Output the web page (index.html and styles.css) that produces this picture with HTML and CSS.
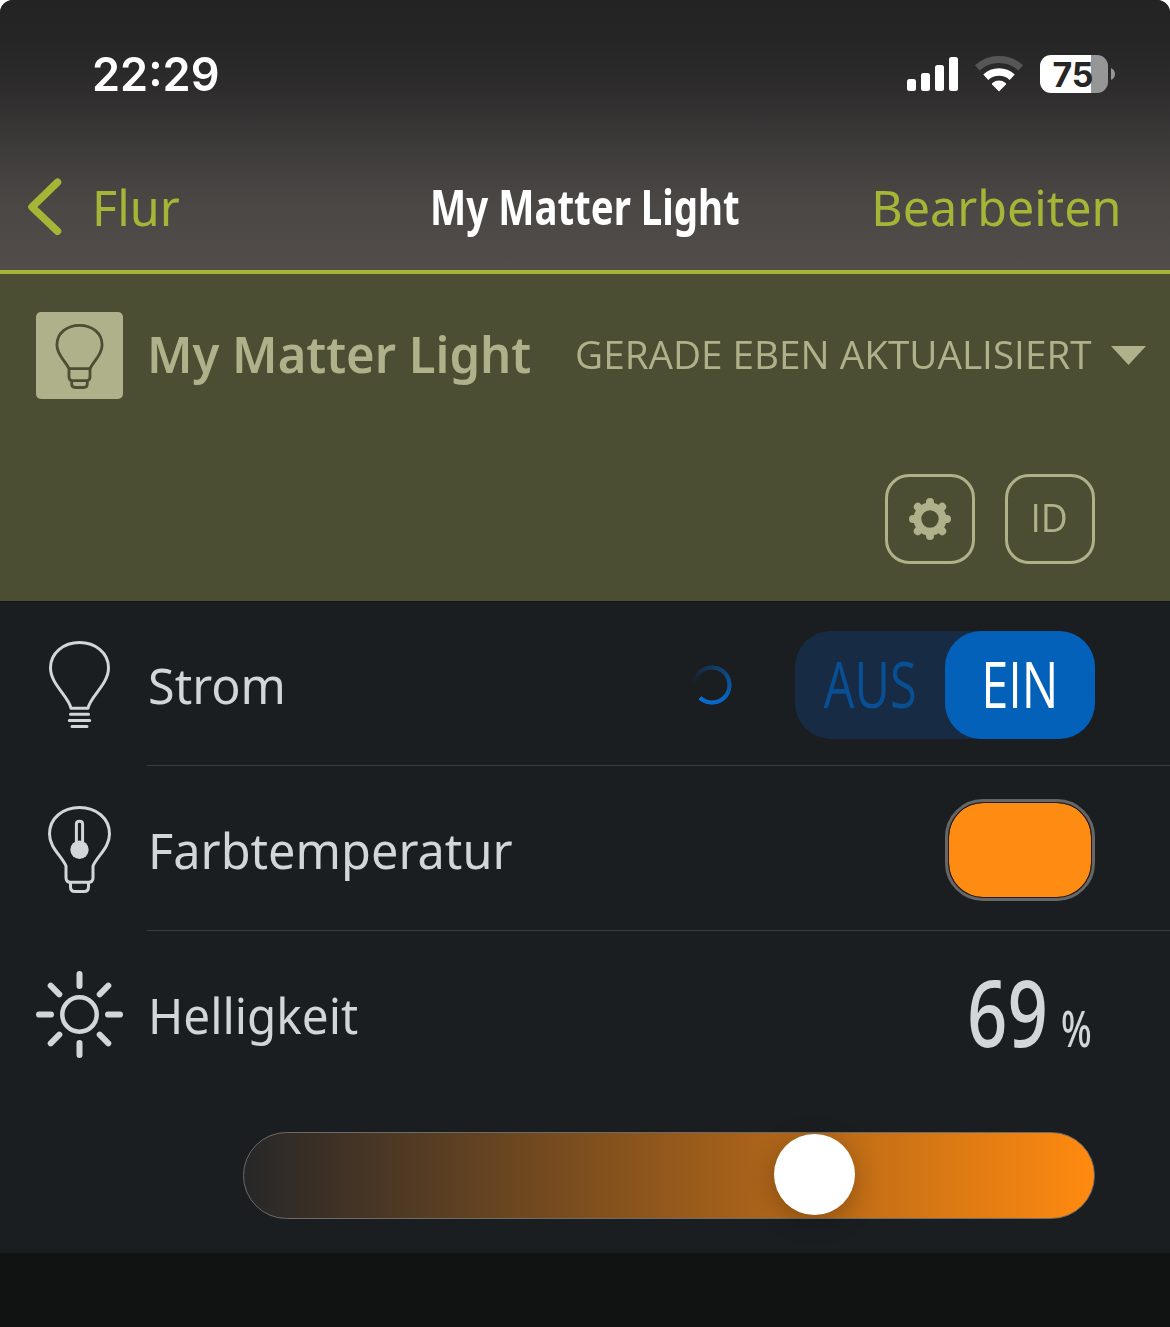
FILE: index.html
```html
<!DOCTYPE html>
<html lang="de">
<head>
<meta charset="utf-8">
<title>My Matter Light</title>
<link rel="stylesheet" href="styles.css">
</head>
<body>
<div class="screen">
  <header class="top">
    <div class="status">
      <span class="clock">22:29</span>
      <div class="indicators">
        <svg class="signal" width="51" height="34" viewBox="0 0 51 34" fill="#fff">
          <rect x="0" y="22" width="9" height="12" rx="2.5"/><rect x="14" y="16" width="9" height="18" rx="2.5"/><rect x="28" y="8" width="9" height="26" rx="2.5"/><rect x="42" y="0" width="9" height="34" rx="2.5"/>
        </svg>
        <svg class="wifi" width="48" height="37" viewBox="0 0 48 37" fill="none">
          <path d="M2.300 12.800A32.300 32.300 0 0 1 45.700 12.800" stroke="#565656" stroke-width="7"/>
          <path d="M10.800 22.200A19.500 19.500 0 0 1 37.200 22.200" stroke="#fff" stroke-width="7.400"/>
          <path d="M24 36.600L17.100 29.500Q16.500 28.600 17.300 27.900Q24 23 30.700 27.900Q31.500 28.600 30.900 29.500Z" fill="#fff"/>
        </svg>
        <div class="battery"><span class="battery-body">75</span><svg width="4" height="12" viewBox="0 0 4 12"><path d="M0 0Q4 2 4 6T0 12Z" fill="#969696"/></svg></div>
      </div>
    </div>
    <nav class="nav">
      <div class="back">
        <svg width="34" height="58" viewBox="0 0 34 58" fill="none" stroke="#a5b636" stroke-width="7.500" stroke-linecap="round" stroke-linejoin="round"><path d="M29.500 4.200L4 29L29.500 53.200"/></svg>
        <span class="back-label">Flur</span>
      </div>
      <h1 class="title">My Matter Light</h1>
      <span class="edit">Bearbeiten</span>
    </nav>
  </header>

  <section class="device">
    <div class="device-head">
      <svg class="tile" width="87" height="87" viewBox="0 0 87 87" fill="none" stroke="#4c4e33" stroke-width="2.800" stroke-linejoin="round">
        <path d="M33 56.700C29.500 49 20.900 43 20.900 33C20.900 21 31 13.300 43.500 13.300S66.100 21 66.100 33C66.100 43 57.500 49 54 56.700Z"/>
        <path d="M33 56.700V65Q33 68.700 36.500 68.700H50.500Q54 68.700 54 65V56.700"/>
        <path d="M35.700 69V72Q35.700 75.500 39.200 75.500H47.800Q51.300 75.500 51.300 72V69"/>
      </svg>
      <h2 class="device-name">My Matter Light</h2>
      <span class="updated">GERADE EBEN AKTUALISIERT</span>
      <svg class="caret" width="35" height="19" viewBox="0 0 35 19"><path d="M0 0H35L17.500 19Z" fill="#afb18a"/></svg>
    </div>
    <div class="actions">
      <div class="action">
        <svg width="42" height="42" viewBox="-21 -21 42 42" fill="none" stroke="#afb18a">
          <circle r="12.600" stroke-width="7.800"/>
          <path d="M0 -13V-17M0 13V17M-13 0H-17M13 0H17M-9.500 -9.500L-12.200 -12.200M9.500 -9.500L12.200 -12.200M-9.500 9.500L-12.200 12.200M9.500 9.500L12.200 12.200" stroke-width="8" stroke-linecap="round"/>
        </svg>
      </div>
      <div class="action"><span class="id">ID</span></div>
    </div>
  </section>

  <main class="list">
    <div class="row">
      <svg class="icon" width="87" height="88" viewBox="0 0 87 88" fill="none" stroke="#d2d6d9" stroke-width="3" stroke-linejoin="round" stroke-linecap="round">
        <path d="M35 67.300C33 55.500 14.500 43.500 14.500 26.700C14.500 12 27.500 1.500 43.500 1.500S72.500 12 72.500 26.700C72.500 43.500 54 55.500 52 67.300Z"/>
        <path d="M34.500 73.300H52.500M33.300 79.400H53.700M36 85.600H51"/>
      </svg>
      <span class="label strom">Strom</span>
      <span class="spinner"></span>
      <div class="switch"><span class="option"><b class="condensed off">AUS</b></span><span class="option selected"><b class="condensed on">EIN</b></span></div>
    </div>
    <div class="row">
      <svg class="icon" width="87" height="88" viewBox="0 0 87 88" fill="none" stroke="#d2d6d9" stroke-width="3" stroke-linejoin="round">
        <path d="M30 60C26 50 13.500 42 13.500 28C13.500 12 27 1.500 43.500 1.500S73.500 12 73.500 28C73.500 42 61 50 57 60V71.500Q57 76.300 52.500 76.300H34.500Q30 76.300 30 71.500Z"/>
        <path d="M34.500 77V81Q34.500 85.500 39 85.500H48Q52.500 85.500 52.500 81V77"/>
        <path d="M40.400 38V18Q40.400 15.200 43.500 15.200T46.600 18V38"/>
        <circle cx="43.500" cy="43.700" r="9.200" fill="#d2d6d9" stroke="none"/>
      </svg>
      <span class="label farbe">Farbtemperatur</span>
      <span class="swatch"></span>
    </div>
    <div class="row">
      <svg class="icon" width="87" height="88" viewBox="0 0 87 88" fill="none" stroke="#d2d6d9" stroke-width="6" stroke-linecap="round">
        <circle cx="43.500" cy="43.500" r="17.200" stroke-width="4.500"/>
        <path d="M43.500 3V15M43.500 72V84M3 43.500H15M72 43.500H84M14.700 14.700L23.300 23.300M72.300 14.700L63.700 23.300M14.700 72.300L23.300 63.700M72.300 72.300L63.700 63.700"/>
      </svg>
      <span class="label hell">Helligkeit</span>
      <div class="reading"><span class="value">69</span><span class="unit">%</span></div>
    </div>
    <div class="slider"><span class="track"><span class="knob"></span></span></div>
  </main>
</div>
</body>
</html>
```
FILE: styles.css
```css
* { box-sizing: border-box; }
body { margin: 0; background: #fff; font-family: "Noto Sans", sans-serif; }
svg { display: block; flex: none; }
h1, h2 { margin: 0; }
span, h1, h2 { white-space: nowrap; }

.screen {
  width: 1170px;
  height: 1327px;
  overflow: hidden;
  background: #111312;
  border-radius: 13px 13px 0 0;
}

.top {
  height: 274px;
  border-bottom: 4px solid #a5b636;
  background: linear-gradient(#232323 0, #252525 35px, #2e2c2c 90px, #3e3c3b 150px, #4b4745 205px, #524d4b 270px);
}
.status {
  height: 148px;
  padding: 0 55px 0 92px;
  display: flex;
  align-items: center;
  justify-content: space-between;
}
.clock { font: 600 46.500px/60px Inter, sans-serif; color: #fff; transform: scaleX(.97); transform-origin: 0 50%; }
.indicators { display: flex; align-items: center; }
.wifi { margin: -2px 17px 0; }
.battery { display: flex; align-items: center; gap: 3px; }
.battery-body {
  width: 68px;
  height: 38px;
  border-radius: 11px;
  background: linear-gradient(90deg, #fff 51px, #969696 51px);
  color: #262626;
  font: 700 34px/39px Inter, sans-serif;
  text-align: center;
  padding-right: 2px;
}

.nav {
  height: 118px;
  padding: 0 48px 0 28px;
  display: grid;
  grid-template-columns: 1fr auto 1fr;
  align-items: center;
  color: #a5b636;
  font-size: 50px;
  line-height: 60px;
}
.back { display: flex; align-items: center; gap: 30px; }
.back-label { transform: scaleX(.97); transform-origin: 0 50%; }
.title {
  width: 308px;
  margin: -2px -9px 0 9px;
  color: #fff;
  font-size: 49px;
  font-weight: 700;
  transform: scaleX(.784);
  transform-origin: 0 50%;
}
.edit { justify-self: end; margin-right: 1px; transform: scaleX(.968); transform-origin: 100% 50%; }

.device { height: 327px; padding-top: 38px; background: #4c4e33; color: #afb18a; }
.device-head { height: 87px; padding-left: 36px; display: flex; align-items: center; }
.tile { background: #afb18a; border-radius: 5px; }
.device-name {
  margin: -3px 0 0 24px;
  width: 428px;
  font-size: 50px;
  line-height: 60px;
  font-weight: 600;
  transform: scaleX(.98);
  transform-origin: 0 50%;
}
.updated {
  width: 536px;
  margin-top: -4px;
  font-family: "Open Sans", sans-serif;
  font-size: 39px;
  line-height: 50px;
  transform: scaleX(.992);
  transform-origin: 0 50%;
}
.actions { margin-top: 75px; padding-right: 75px; display: flex; justify-content: flex-end; gap: 30px; }
.action {
  width: 90px;
  height: 90px;
  border: 3px solid #afb18a;
  border-radius: 24px;
  display: flex;
  align-items: center;
  justify-content: center;
}
.id { font-family: "Open Sans", sans-serif; font-size: 38px; line-height: 50px; margin: -4px 2px 0 0; transform: scaleX(.98); }

.list { height: 652px; background: #1b1e21; color: #d2d6d9; border-top: 1px solid #14171a; }
.row {
  height: 165px;
  padding: 0 75px 0 36px;
  display: flex;
  align-items: center;
  background: linear-gradient(#3b3d3f, #3b3d3f) 147px 163px / 1023px 1px no-repeat;
}
.row:nth-child(3) { background: none; }
.label { flex: 1; margin-left: 25px; font-size: 50px; line-height: 60px; transform-origin: 0 50%; }
.strom { transform: scaleX(.97); }
.farbe { transform: scaleX(.973); }
.hell { transform: scaleX(.953); }
.spinner {
  width: 40px;
  height: 40px;
  margin-right: 63px;
  border-radius: 50%;
  background: conic-gradient(from 275deg, rgba(7, 100, 189, 0), rgba(7, 100, 189, .4) 90deg, #0764c0 220deg, #0a6cd0 308deg, transparent 310deg);
  -webkit-mask: radial-gradient(circle closest-side, transparent 15px, #000 15.800px, #000 19.300px, transparent 20px);
  mask: radial-gradient(circle closest-side, transparent 15px, #000 15.800px, #000 19.300px, transparent 20px);
}
.switch { display: flex; width: 300px; height: 108px; border-radius: 36px; background: #172c44; }
.option { width: 150px; display: flex; align-items: center; justify-content: center; border-radius: 36px; color: #094f93; }
.selected { background: #0461ba; color: #fff; }
.condensed {
  font-family: "Open Sans", sans-serif;
  font-weight: 500;
  font-size: 64px;
  line-height: 80px;
  margin-top: -2px;
  transform: scaleX(.76);
}
.swatch {
  width: 150px;
  height: 102px;
  border: 3px solid #666;
  border-radius: 38px;
  padding: 1px;
  background: #ff8c12 content-box;
  box-shadow: inset 0 0 0 1px #251c14;
}
.reading { display: flex; align-items: baseline; margin-top: -8px; font-weight: 500; }
.value { font-size: 93px; line-height: 120px; width: 94px; transform: scaleX(.76); transform-origin: 0 50%; }
.unit { font-size: 50px; width: 34px; transform: scaleX(.72); transform-origin: 0 50%; }

.slider { padding: 35px 75px 0 243px; }
.track {
  display: flex;
  align-items: flex-start;
  height: 87px;
  padding: 1px 0 0 530px;
  border: 1px solid #6d6a67;
  border-radius: 44px;
  background: linear-gradient(90deg, #272728, #ff8a10);
}
.knob { width: 81px; height: 81px; border-radius: 50%; background: #fff; box-shadow: 0 6px 24px rgba(0, 0, 0, .25); }
```
